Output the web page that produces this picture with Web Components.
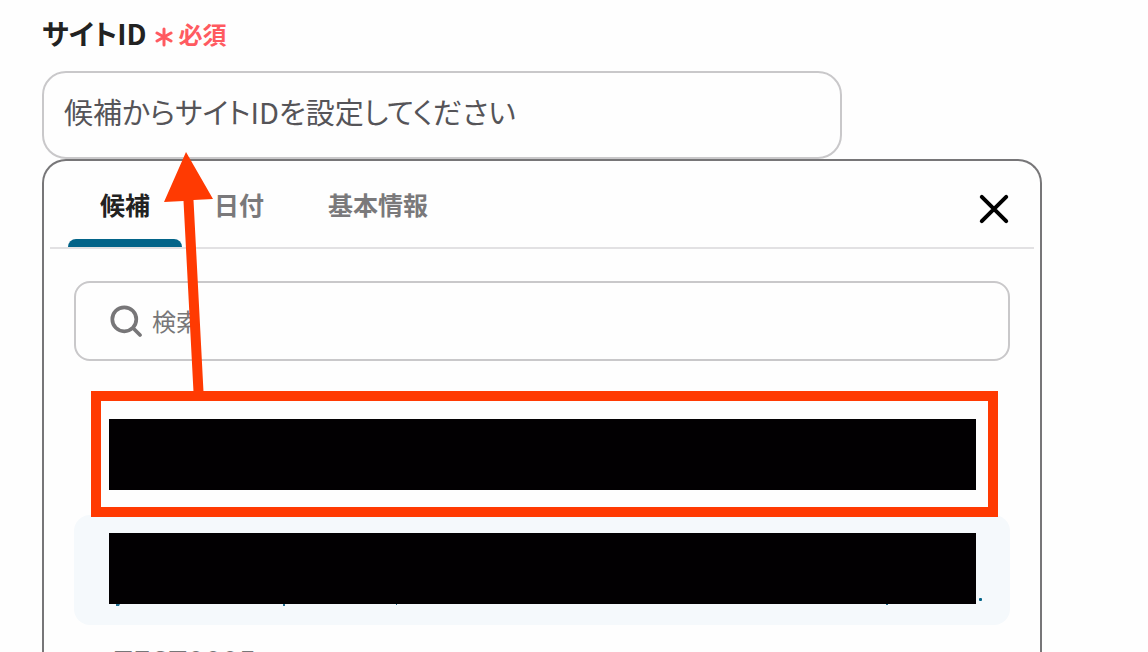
<!DOCTYPE html>
<html lang="ja">
<head>
<meta charset="utf-8">
<title>サイトID</title>
<style>
  html, body { margin: 0; height: 100%; }
  body {
    overflow: hidden;
    background: #fefefe;
    color: #222;
    font-family: "Noto Sans CJK JP", sans-serif;
  }
</style>
</head>
<body>
<site-form></site-form>

<script>
const define = (name, html, setup) => {
  const template = document.createElement('template');
  template.innerHTML = html;
  customElements.define(name, class extends HTMLElement {
    constructor() {
      super();
      this.attachShadow({ mode: 'open' }).append(template.content.cloneNode(true));
    }
    connectedCallback() { if (setup) setup(this, this.shadowRoot); }
  });
};

define('text-field', `
  <style>
    :host { display: block; max-width: 800px; }
    .head { display: flex; align-items: center; gap: 8px; height: 35px; }
    label { font-size: 28px; line-height: 36px; padding-bottom: 2px; font-weight: 700; font-feature-settings: "palt"; }
    .required { display: flex; align-items: center; gap: 6px; color: #ff5a60; font-size: 24px; line-height: 32px; font-weight: 700; }
    svg { display: block; padding-top: 6px; }
    input {
      display: block; box-sizing: border-box; width: 100%; height: 88px; margin-top: 20px;
      padding: 0 20px 8px; border: 2px solid #c9c8ca; border-radius: 24px;
      background: #fefefe; outline: none;
      font: 400 29px/40px "Noto Sans CJK JP", sans-serif; font-feature-settings: "palt";
    }
    input::placeholder { color: #555458; opacity: 1; }
  </style>
  <div class="head">
    <label for="field"><slot></slot></label>
    <span class="required">
      <svg width="18" height="20" viewBox="0 0 18 20" fill="none" stroke="currentColor" stroke-width="3" stroke-linecap="round" aria-hidden="true"><path d="M9 2v16M2 6l14 8M16 6L2 14"/></svg>
      <slot name="required"></slot>
    </span>
  </div>
  <input id="field" type="text">
`, (el, root) => { root.querySelector('input').placeholder = el.getAttribute('placeholder') || ''; });

define('tab-button', `
  <style>
    :host { display: flex; }
    button {
      position: relative; padding: 0 32px; border: 0; background: none; color: #7a797b;
      font: 700 25px/36px "Noto Sans CJK JP", sans-serif; white-space: nowrap;
    }
    :host([selected]) button { color: #222; }
    :host([selected]) button::after {
      content: ""; position: absolute; left: 0; right: 0; bottom: 0; height: 8px;
      background: #036489; border-radius: 8px 8px 0 0;
    }
  </style>
  <button type="button" role="tab"><slot></slot></button>
`, (el, root) => root.querySelector('button').setAttribute('aria-selected', el.hasAttribute('selected')));

define('close-button', `
  <style>
    :host { display: flex; align-items: center; }
    button { display: block; padding: 8px; border: 0; background: none; color: #000; }
    svg { display: block; }
  </style>
  <button type="button" aria-label="閉じる">
    <svg width="32" height="32" viewBox="0 0 32 32" fill="none" stroke="currentColor" stroke-width="4" stroke-linecap="round"><path d="M3.8 3.8l24.4 24.4M28.2 3.8L3.8 28.2"/></svg>
  </button>
`);

define('search-box', `
  <style>
    :host {
      display: flex; align-items: center; gap: 10px; box-sizing: border-box; height: 80px;
      padding: 0 34px; border: 2px solid #c9c8ca; border-radius: 16px; background: #fefefe;
    }
    svg { display: block; flex: none; color: #777678; }
    input {
      flex: 1; min-width: 0; padding: 0; border: 0; outline: none; background: none;
      font: 400 24px/36px "Noto Sans CJK JP", sans-serif;
    }
    input::placeholder { color: #777678; opacity: 1; }
  </style>
  <svg width="32" height="32" viewBox="0 0 32 32" fill="none" stroke="currentColor" stroke-width="3.7" stroke-linecap="round" aria-hidden="true"><circle cx="14.3" cy="14.3" r="12"/><path d="M23.5 23.5l6.5 6.5"/></svg>
  <input type="search" aria-label="検索" placeholder="検索">
`);

define('candidate-item', `
  <style>
    :host {
      display: block; position: relative; box-sizing: border-box; min-height: 110px;
      padding: 18px 34px; border-radius: 16px; color: #777678; font-size: 31px; line-height: 36px;
    }
    :host([active]) { background: #f5f9fc; color: #036489; }
    :host([highlighted]) { z-index: 1; }
  </style>
  <slot></slot>
`);

define('masked-text', `
  <style>
    :host { display: block; position: relative; height: 71px; margin-left: 1px; background: #020002; }
    svg { display: none; position: absolute; left: 0; bottom: -2px; overflow: visible; }
    .end { left: auto; right: -6px; bottom: 3px; }
    :host([overflowing]) svg { display: block; }
  </style>
  <svg width="780" height="2" fill="#236f91" aria-hidden="true"><path d="M7 0h4l-1 2h-3zM174 0h2v2h-2zM287 0h1v1h-1zM777 0h2v1h-2z"/></svg>
  <svg class="end" width="3" height="3" fill="#036489" aria-hidden="true"><rect width="3" height="3" rx="1"/></svg>
`);

define('callout-mark', `
  <style>
    :host { display: block; position: absolute; inset: -10px 12px -6px 17px; border: 10px solid #ff3a02; pointer-events: none; }
    svg { display: block; position: absolute; left: 63px; bottom: 100%; margin-bottom: 9px; }
  </style>
  <svg width="49" height="240" viewBox="0 0 49 240" fill="#ff3a02" aria-hidden="true"><path d="M22 0L49 47L29.5 48L39.5 240H29.5L19.5 49L0 50Z"/></svg>
`);

define('candidate-panel', `
  <style>
    :host {
      display: flex; flex-direction: column; flex: 1; box-sizing: border-box; max-width: 1000px;
      border: 2px solid #777678; border-bottom: 0; border-radius: 24px 24px 0 0; background: #fefefe;
    }
    header {
      display: flex; box-sizing: border-box; height: 88px; margin: 0 6px;
      padding: 0 16px 0 18px; border-bottom: 2px solid #e2e1e3;
    }
    .tabs { display: flex; flex: 1; }
    close-button { padding-top: 9px; }
    .body { padding: 32px 30px 0; }
    .list { display: flex; flex-direction: column; gap: 4px; margin-top: 40px; }
    .list candidate-item:last-child { padding: 14px 40px; }
  </style>
  <header>
    <div class="tabs" role="tablist">
      <tab-button selected>候補</tab-button>
      <tab-button>日付</tab-button>
      <tab-button>基本情報</tab-button>
    </div>
    <close-button></close-button>
  </header>
  <div class="body">
    <search-box></search-box>
    <div class="list">
      <candidate-item highlighted><masked-text></masked-text><callout-mark></callout-mark></candidate-item>
      <candidate-item active><masked-text overflowing></masked-text></candidate-item>
      <candidate-item>TEST0005</candidate-item>
    </div>
  </div>
`);

define('site-form', `
  <style>
    :host { display: flex; flex-direction: column; box-sizing: border-box; height: 100vh; padding: 16px 42px 0; }
    text-field { flex: none; }
  </style>
  <text-field placeholder="候補からサイトIDを設定してください">サイトID<span slot="required">必須</span></text-field>
  <candidate-panel></candidate-panel>
`);
</script>
</body>
</html>
